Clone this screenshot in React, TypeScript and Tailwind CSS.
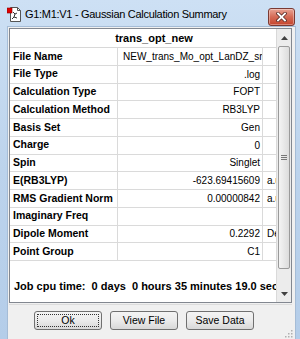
const font = { fontFamily: '"Liberation Sans", Arial, sans-serif' };

const rows: [string, string, string, boolean?][] = [
  ['File Name', 'NEW_trans_Mo_opt_LanDZ_small', '', true],
  ['File Type', '.log', ''],
  ['Calculation Type', 'FOPT', ''],
  ['Calculation Method', 'RB3LYP', ''],
  ['Basis Set', 'Gen', ''],
  ['Charge', '0', ''],
  ['Spin', 'Singlet', ''],
  ['E(RB3LYP)', '-623.69415609', 'a.u.'],
  ['RMS Gradient Norm', '0.00000842', 'a.u.'],
  ['Imaginary Freq', '', ''],
  ['Dipole Moment', '0.2292', 'Debye'],
  ['Point Group', 'C1', ''],
];

function AppIcon() {
  return (
    <svg width="14" height="15" viewBox="0 0 14 15" className="shrink-0">
      <path d="M3.5 0.5h7l3 3v11h-10z" fill="#fff" stroke="#555" />
      <path d="M10.5 0.5v3h3" fill="none" stroke="#555" />
      <path d="M6 5l2 2 2-1M8 7l-1 3 3 1M7 10l-2 2" fill="none" stroke="#333" strokeWidth="1" />
      <rect x="0" y="1" width="5" height="5" fill="#e00000" stroke="#800" strokeWidth="0.6" />
    </svg>
  );
}

function CloseButton() {
  return (
    <div className="w-[27px] h-[18px] rounded-[3px] border border-[#7a3a33] bg-gradient-to-b from-[#e8a394] via-[#d46a55] to-[#c5432c] flex items-center justify-center shadow-[inset_0_0_0_1px_rgba(255,255,255,0.35)]">
      <svg width="11" height="10" viewBox="0 0 11 10">
        <path d="M2 1.5l7 7M9 1.5l-7 7" stroke="#5a2a24" strokeWidth="3.4" strokeLinecap="square" />
        <path d="M2 1.5l7 7M9 1.5l-7 7" stroke="#fff" strokeWidth="1.8" strokeLinecap="square" />
      </svg>
    </div>
  );
}

function Arrow({ up }: { up?: boolean }) {
  return (
    <div className="h-[17px] flex items-center justify-center">
      <svg width="7" height="4" viewBox="0 0 7 4">
        <path d={up ? 'M0 4L3.5 0L7 4z' : 'M0 0L3.5 4L7 0z'} fill="#404040" />
      </svg>
    </div>
  );
}

function Scrollbar() {
  return (
    <div className="w-[14px] bg-[#ececec] flex flex-col">
      <Arrow up />
      <div className="flex-1 px-[1px]">
        <div className="h-[223px] rounded-[2px] border border-[#9a9a9a] bg-gradient-to-r from-[#f4f4f4] to-[#dcdcdc] flex items-center justify-center">
          <div className="flex flex-col gap-[1px]">
            <div className="w-[6px] h-[1px] bg-[#777]" />
            <div className="w-[6px] h-[1px] bg-[#777]" />
            <div className="w-[6px] h-[1px] bg-[#777]" />
          </div>
        </div>
      </div>
      <Arrow />
    </div>
  );
}

function Btn({ label, focus }: { label: string; focus?: boolean }) {
  return (
    <div className="w-[68px] h-[19px] rounded-[3px] border border-[#707070] bg-gradient-to-b from-[#f4f4f4] via-[#ebebeb] to-[#d8d8d8] p-[2px]">
      <div
        className={`h-full flex items-center justify-center text-[10.5px] text-black ${focus ? 'border border-dotted border-[#333]' : ''}`}
      >
        {label}
      </div>
    </div>
  );
}

export default function App() {
  return (
    <div className="w-[300px] h-[339px] bg-gradient-to-b from-[#cde0f4] via-[#bcd3ec] to-[#b4cde9] flex flex-col overflow-hidden" style={font}>
      <div className="h-[26px] flex items-center pl-[7px] pr-[5px] shrink-0">
        <div className="pt-[3px] flex items-center flex-1">
          <AppIcon />
          <span className="ml-[4px] text-[11px] tracking-[-0.3px] text-black">G1:M1:V1 - Gaussian Calculation Summary</span>
        </div>
        <div className="self-start mt-[8px]">
          <CloseButton />
        </div>
      </div>
      <div className="flex-1 ml-[7px] mr-[4px] mb-[4px] bg-[#f0f0f0] flex flex-col border border-[#a5bcd6]">
        <div className="mt-[1px] ml-[1px] mr-[3px] h-[275px] border border-[#828790] bg-white flex">
          <div className="flex-1 flex flex-col min-w-0">
            <div className="h-[19px] border-b border-r border-[#d8d8d8] flex items-center justify-center pl-[22px] font-bold text-[11px] text-black">
              trans_opt_new
            </div>
            {rows.map(([k, v, u, left]) => (
              <div key={k} className="h-[17.75px] flex border-b border-[#dadada] text-black">
                <div className="w-[108px] shrink-0 border-r border-[#dadada] pl-[3px] flex items-center font-bold text-[10.5px] whitespace-nowrap">
                  {k}
                </div>
                <div
                  className={`w-[145px] shrink-0 border-r border-[#dadada] flex items-center text-[10px] whitespace-nowrap overflow-hidden ${left ? 'justify-start pl-[5px]' : 'justify-end pr-[2px]'}`}
                >
                  {v}
                </div>
                <div className="flex-1 border-r border-[#dadada] flex items-center pl-[4px] text-[10px] whitespace-nowrap overflow-hidden">
                  {u}
                </div>
              </div>
            ))}
            <div className="flex-1 border-r border-[#dadada] pt-[17px] pl-[4px] font-bold text-[11px] text-black whitespace-nowrap overflow-hidden">
              Job cpu time:&nbsp; 0 days&nbsp; 0 hours 35 minutes 19.0 seconds
            </div>
          </div>
          <Scrollbar />
        </div>
        <div className="h-[1px] mt-[1px] mr-[3px] ml-[1px] bg-[#dcdcdc]" />
        <div className="flex gap-[8px] pl-[26px] mt-[6px]">
          <Btn label="Ok" focus />
          <Btn label="View File" />
          <Btn label="Save Data" />
        </div>
        <div className="flex-1 flex justify-end items-end pr-[2px] pb-[2px]">
          <svg width="8" height="8" viewBox="0 0 8 8">
            <rect x="6" y="0" width="1.5" height="1.5" fill="#b0b0b0" />
            <rect x="3" y="3" width="1.5" height="1.5" fill="#b0b0b0" />
            <rect x="6" y="3" width="1.5" height="1.5" fill="#b0b0b0" />
            <rect x="0" y="6" width="1.5" height="1.5" fill="#b0b0b0" />
            <rect x="3" y="6" width="1.5" height="1.5" fill="#b0b0b0" />
            <rect x="6" y="6" width="1.5" height="1.5" fill="#b0b0b0" />
          </svg>
        </div>
      </div>
    </div>
  );
}
